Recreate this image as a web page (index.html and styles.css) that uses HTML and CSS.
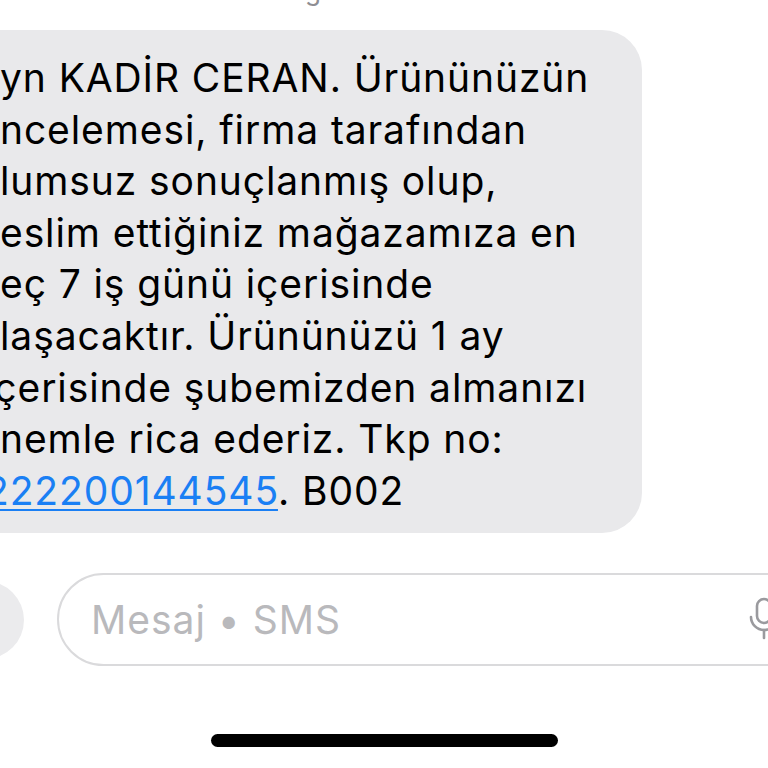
FILE: index.html
```html
<!DOCTYPE html>
<html lang="tr">
<head>
<meta charset="utf-8">
<link rel="stylesheet" href="styles.css">
</head>
<body>
<div class="screen">
  <div class="stamp"><span>Bugün 15:42</span></div>
  <div class="thread">
    <div class="bubble">
      <div class="line">yn KADİR CERAN. Ürününüzün</div>
      <div class="line">ncelemesi, firma tarafından</div>
      <div class="line">lumsuz sonuçlanmış olup,</div>
      <div class="line">eslim ettiğiniz mağazamıza en</div>
      <div class="line">eç 7 iş günü içerisinde</div>
      <div class="line">laşacaktır. Ürününüzü 1 ay</div>
      <div class="line cut">içerisinde şubemizden almanızı</div>
      <div class="line">nemle rica ederiz. Tkp no:</div>
      <div class="line cut2"><a class="link" href="#">222200144545</a>. B002</div>
    </div>
  </div>
  <div class="composer">
    <div class="plus"></div>
    <div class="field">
      <span class="placeholder">Mesaj • SMS</span>
      <svg class="mic" width="30" height="44" viewBox="0 0 30 44">
        <rect x="8" y="2" width="14" height="24" rx="7" fill="none" stroke="#9a9a9e" stroke-width="2.6"/>
        <path d="M2 20 a13 13 0 0 0 26 0" fill="none" stroke="#9a9a9e" stroke-width="2.6" stroke-linecap="round"/>
        <path d="M15 33 v8" stroke="#9a9a9e" stroke-width="2.6" stroke-linecap="round"/>
      </svg>
    </div>
  </div>
  <div class="home-wrap"><div class="home"></div></div>
</div>
</body>
</html>
```

FILE: styles.css
```css
html, body {
  margin: 0;
  padding: 0;
  background: #ffffff;
}
.screen {
  width: 768px;
  height: 768px;
  overflow: hidden;
  display: flex;
  flex-direction: column;
  font-family: Inter, "Noto Sans", sans-serif;
}
.stamp {
  height: 30px;
  overflow: hidden;
  display: flex;
  justify-content: center;
}
.stamp span {
  display: block;
  margin-top: -24px;
  margin-right: 70px;
  font-size: 26px;
  line-height: 30px;
  color: #8e8e93;
}
.thread {
  display: flex;
}
.bubble {
  margin-left: -40px;
  width: 682px;
  height: 503px;
  box-sizing: border-box;
  background: #e9e9eb;
  border-radius: 40px;
  padding: 22px 0 0 40px;
  color: #000;
  font-size: 39px;
  line-height: 51.6px;
  letter-spacing: 0.9px;
  white-space: nowrap;
  overflow: hidden;
}
.line.cut {
  margin-left: -16px;
}
.line.cut2 {
  margin-left: -15px;
}
.link {
  color: #1a7ff4;
  text-decoration: underline;
  text-decoration-thickness: 2px;
  text-underline-offset: 4px;
}
.composer {
  margin-top: 40px;
  height: 93px;
  display: flex;
  align-items: center;
  gap: 33px;
}
.plus {
  flex: none;
  width: 78px;
  height: 78px;
  margin-left: -54px;
  border-radius: 50%;
  background: #ebebed;
}
.field {
  flex: none;
  width: 760px;
  height: 93px;
  box-sizing: border-box;
  border: 2px solid #dadadc;
  border-radius: 47px;
  display: flex;
  align-items: center;
  padding-left: 32px;
  position: relative;
}
.placeholder {
  font-size: 39px;
  color: #b9b9bc;
  letter-spacing: 1px;
}
.mic {
  position: absolute;
  left: 690px;
  top: 22px;
}
.home-wrap {
  margin-top: 68px;
  display: flex;
  justify-content: center;
}
.home {
  width: 347px;
  height: 13px;
  border-radius: 7px;
  background: #000;
}
```
